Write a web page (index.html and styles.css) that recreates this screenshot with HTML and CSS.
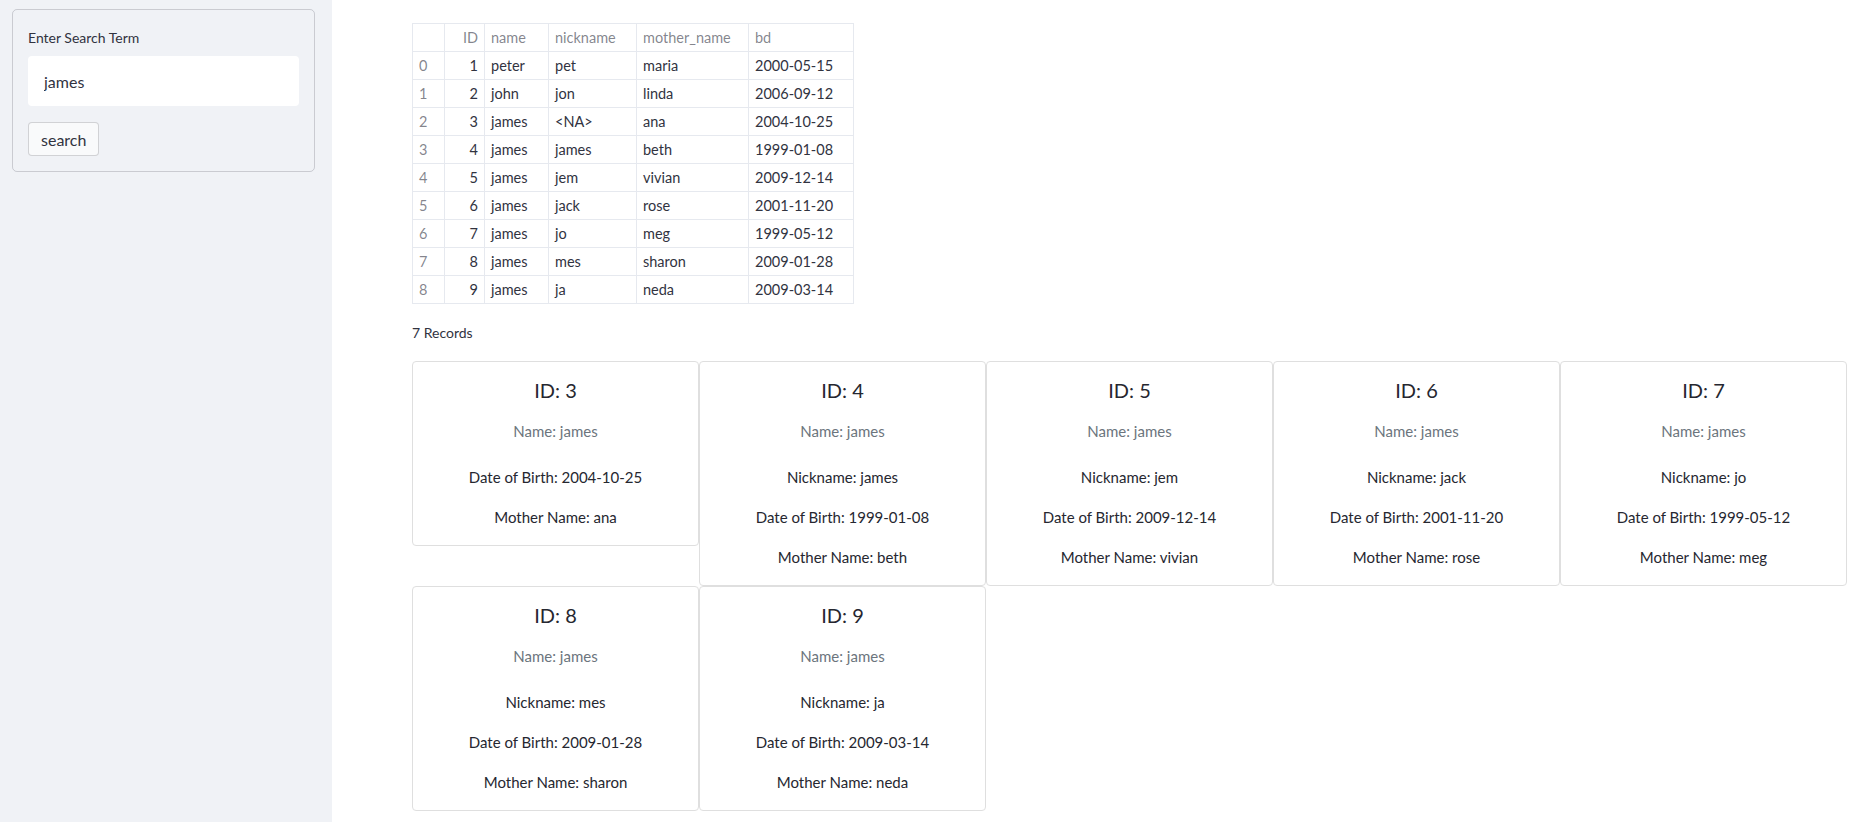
FILE: index.html
```html
<!DOCTYPE html>
<html lang="en">
<head>
  <meta charset="UTF-8" />
  <meta name="viewport" content="width=device-width, initial-scale=1.0"/>
  <title>Search Records</title>
  <link rel="stylesheet" href="styles.css">
</head>
<body>
  <div class="app">
    <aside class="sidebar">
      <form class="search-form" onsubmit="return false;">
        <label class="form-label" for="term">Enter Search Term</label>
        <input id="term" class="text-input" type="text" value="james" />
        <button class="btn" type="submit">search</button>
      </form>
    </aside>

    <main class="main">
      <table class="data-table">
        <colgroup>
          <col style="width: 32px">
          <col style="width: 40px">
          <col style="width: 64px">
          <col style="width: 88px">
          <col style="width: 112px">
          <col style="width: 105px">
        </colgroup>
        <thead>
          <tr>
            <th></th>
            <th class="num">ID</th>
            <th>name</th>
            <th>nickname</th>
            <th>mother_name</th>
            <th>bd</th>
          </tr>
        </thead>
        <tbody>
          <tr><td class="idx">0</td><td class="num">1</td><td>peter</td><td>pet</td><td>maria</td><td>2000-05-15</td></tr>
          <tr><td class="idx">1</td><td class="num">2</td><td>john</td><td>jon</td><td>linda</td><td>2006-09-12</td></tr>
          <tr><td class="idx">2</td><td class="num">3</td><td>james</td><td>&lt;NA&gt;</td><td>ana</td><td>2004-10-25</td></tr>
          <tr><td class="idx">3</td><td class="num">4</td><td>james</td><td>james</td><td>beth</td><td>1999-01-08</td></tr>
          <tr><td class="idx">4</td><td class="num">5</td><td>james</td><td>jem</td><td>vivian</td><td>2009-12-14</td></tr>
          <tr><td class="idx">5</td><td class="num">6</td><td>james</td><td>jack</td><td>rose</td><td>2001-11-20</td></tr>
          <tr><td class="idx">6</td><td class="num">7</td><td>james</td><td>jo</td><td>meg</td><td>1999-05-12</td></tr>
          <tr><td class="idx">7</td><td class="num">8</td><td>james</td><td>mes</td><td>sharon</td><td>2009-01-28</td></tr>
          <tr><td class="idx">8</td><td class="num">9</td><td>james</td><td>ja</td><td>neda</td><td>2009-03-14</td></tr>
        </tbody>
      </table>

      <p class="count">7 Records</p>

      <div class="cards">
        <div class="card">
          <h5 class="card-title">ID: 3</h5>
          <h6 class="card-subtitle">Name: james</h6>
          <p class="card-text">Date of Birth: 2004-10-25</p>
          <p class="card-text">Mother Name: ana</p>
        </div>
        <div class="card">
          <h5 class="card-title">ID: 4</h5>
          <h6 class="card-subtitle">Name: james</h6>
          <p class="card-text">Nickname: james</p>
          <p class="card-text">Date of Birth: 1999-01-08</p>
          <p class="card-text">Mother Name: beth</p>
        </div>
        <div class="card">
          <h5 class="card-title">ID: 5</h5>
          <h6 class="card-subtitle">Name: james</h6>
          <p class="card-text">Nickname: jem</p>
          <p class="card-text">Date of Birth: 2009-12-14</p>
          <p class="card-text">Mother Name: vivian</p>
        </div>
        <div class="card">
          <h5 class="card-title">ID: 6</h5>
          <h6 class="card-subtitle">Name: james</h6>
          <p class="card-text">Nickname: jack</p>
          <p class="card-text">Date of Birth: 2001-11-20</p>
          <p class="card-text">Mother Name: rose</p>
        </div>
        <div class="card">
          <h5 class="card-title">ID: 7</h5>
          <h6 class="card-subtitle">Name: james</h6>
          <p class="card-text">Nickname: jo</p>
          <p class="card-text">Date of Birth: 1999-05-12</p>
          <p class="card-text">Mother Name: meg</p>
        </div>
        <div class="card">
          <h5 class="card-title">ID: 8</h5>
          <h6 class="card-subtitle">Name: james</h6>
          <p class="card-text">Nickname: mes</p>
          <p class="card-text">Date of Birth: 2009-01-28</p>
          <p class="card-text">Mother Name: sharon</p>
        </div>
        <div class="card">
          <h5 class="card-title">ID: 9</h5>
          <h6 class="card-subtitle">Name: james</h6>
          <p class="card-text">Nickname: ja</p>
          <p class="card-text">Date of Birth: 2009-03-14</p>
          <p class="card-text">Mother Name: neda</p>
        </div>
      </div>
    </main>
  </div>
</body>
</html>
```

FILE: styles.css
```css
:root {
  --sidebar-bg: #f0f2f6;
  --text-color: #31333f;
  --muted: rgba(49, 51, 63, 0.6);
  --border: rgba(49, 51, 63, 0.2);
  --table-border: #e6e9ef;
  --card-border: #dfdfdf;
}

* {
  box-sizing: border-box;
}

body {
  margin: 0;
  font-family: Lato, "Liberation Sans", sans-serif;
  color: var(--text-color);
  background-color: #ffffff;
}

.app {
  display: flex;
  min-height: 822px;
}

/* Sidebar */
.sidebar {
  width: 332px;
  flex-shrink: 0;
  background-color: var(--sidebar-bg);
  padding: 9px 17px 0 12px;
}

.search-form {
  display: flex;
  flex-direction: column;
  align-items: flex-start;
  border: 1px solid var(--border);
  border-radius: 5px;
  padding: 18px 15px 15px 15px;
}

.form-label {
  font-size: 14px;
  line-height: 20px;
  margin-bottom: 8px;
}

.text-input {
  width: 100%;
  height: 50px;
  border: none;
  border-radius: 4px;
  background-color: #ffffff;
  padding: 0 16px;
  font-family: inherit;
  font-size: 16px;
  color: var(--text-color);
  outline: none;
  margin-bottom: 16px;
}

.btn {
  height: 34px;
  padding: 0 12px;
  background-color: #f9fafb;
  border: 1px solid var(--border);
  border-radius: 4px;
  font-family: inherit;
  font-size: 16px;
  color: var(--text-color);
  cursor: pointer;
}

/* Main area */
.main {
  flex: 1;
  padding: 23px 11px 10px 80px;
}

.data-table {
  border-collapse: collapse;
  table-layout: fixed;
  width: 441px;
  font-size: 14.5px;
  border: 1px solid var(--table-border);
}

.data-table th,
.data-table td {
  border: 1px solid var(--table-border);
  height: 28px;
  padding: 0 6px;
  text-align: left;
  font-weight: normal;
  white-space: nowrap;
}

.data-table th {
  color: var(--muted);
}

.data-table .num {
  text-align: right;
}

.data-table .idx {
  color: var(--muted);
}

.count {
  font-size: 14px;
  margin: 19px 0 18px 0;
  line-height: 20px;
}

/* Cards */
.cards {
  display: flex;
  flex-wrap: wrap;
  align-items: flex-start;
}

.card {
  width: 287px;
  border: 1px solid var(--card-border);
  border-radius: 4px;
  padding: 16px;
  text-align: center;
}

.card-title {
  font-size: 20px;
  font-weight: normal;
  line-height: 24px;
  margin: 0 0 17px 0;
  color: #262730;
}

.card-subtitle {
  font-size: 15px;
  font-weight: normal;
  line-height: 24px;
  margin: 0 0 22px 0;
  color: #6c757d;
}

.card-text {
  font-size: 15px;
  line-height: 24px;
  margin: 0 0 16px 0;
  color: #262730;
}

.card-text:last-child {
  margin-bottom: 0;
}
```
